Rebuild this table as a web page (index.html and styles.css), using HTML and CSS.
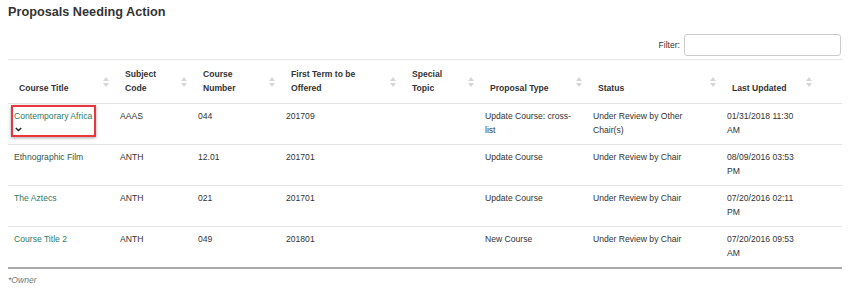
FILE: index.html
```html
<!DOCTYPE html>
<html>
<head>
<meta charset="utf-8">
<link rel="stylesheet" href="styles.css">
</head>
<body>
<div class="page">
  <h2 class="title">Proposals Needing Action</h2>
  <div class="toolbar">
    <label class="filter-label" for="flt">Filter:</label>
    <input id="flt" class="filter-input" type="text">
  </div>
  <table class="grid">
    <colgroup>
      <col class="c1"><col class="c2"><col class="c3"><col class="c4"><col class="c5"><col class="c6"><col class="c7"><col class="c8"><col class="c9">
    </colgroup>
    <thead>
      <tr>
        <th>Course Title<span class="sort"></span></th>
        <th>Subject Code<span class="sort"></span></th>
        <th>Course Number<span class="sort"></span></th>
        <th>First Term to be Offered<span class="sort"></span></th>
        <th>Special Topic<span class="sort"></span></th>
        <th>Proposal Type<span class="sort"></span></th>
        <th>Status<span class="sort"></span></th>
        <th>Last Updated<span class="sort"></span></th>
        <th class="blank"></th>
      </tr>
    </thead>
    <tbody>
      <tr>
        <td><div class="highlight"><a class="link" href="#">Contemporary Africa</a><div class="chev"><svg width="7" height="5" viewBox="0 0 7 5"><path d="M0.8 0.9 L3.5 3.6 L6.2 0.9" fill="none" stroke="#222" stroke-width="1.4"/></svg></div></div></td>
        <td>AAAS</td>
        <td>044</td>
        <td>201709</td>
        <td></td>
        <td>Update Course: cross-list</td>
        <td>Under Review by Other Chair(s)</td>
        <td>01/31/2018 11:30 AM</td>
        <td></td>
      </tr>
      <tr>
        <td><a class="link visited" href="#">Ethnographic Film</a></td>
        <td>ANTH</td>
        <td>12.01</td>
        <td>201701</td>
        <td></td>
        <td>Update Course</td>
        <td>Under Review by Chair</td>
        <td>08/09/2016 03:53 PM</td>
        <td></td>
      </tr>
      <tr>
        <td><a class="link" href="#">The Aztecs</a></td>
        <td>ANTH</td>
        <td>021</td>
        <td>201701</td>
        <td></td>
        <td>Update Course</td>
        <td>Under Review by Chair</td>
        <td>07/20/2016 02:11 PM</td>
        <td></td>
      </tr>
      <tr>
        <td><a class="link" href="#">Course Title 2</a></td>
        <td>ANTH</td>
        <td>049</td>
        <td>201801</td>
        <td></td>
        <td>New Course</td>
        <td>Under Review by Chair</td>
        <td>07/20/2016 09:53 AM</td>
        <td></td>
      </tr>
    </tbody>
  </table>
  <p class="note">*Owner</p>
</div>
</body>
</html>
```
FILE: styles.css
```css
html, body {
  margin: 0;
  padding: 0;
  background: #fff;
}
body {
  font-family: "Liberation Sans", Arial, sans-serif;
  color: #333;
  font-size: 8.6px;
  line-height: 14px;
}
.page {
  padding: 0 8px;
}
.title {
  margin: 4px 0 0 0;
  font-size: 12.7px;
  line-height: 16px;
  font-weight: bold;
  color: #333;
}
.toolbar {
  display: flex;
  justify-content: flex-end;
  align-items: center;
  gap: 4px;
  margin-top: 14px;
  padding-right: 1px;
}
.filter-label {
  font-size: 8.6px;
  color: #333;
}
.filter-input {
  box-sizing: border-box;
  width: 157px;
  height: 22px;
  border: 1px solid #ccc;
  border-radius: 3px;
  margin: 0;
  padding: 0 6px;
  font: inherit;
}
.grid {
  margin-top: 3px;
  width: 834px;
  border-collapse: collapse;
  table-layout: fixed;
}
.c1 { width: 106px; }
.c2 { width: 78px; }
.c3 { width: 88px; }
.c4 { width: 121px; }
.c5 { width: 78px; }
.c6 { width: 108px; }
.c7 { width: 134px; }
.c8 { width: 96px; }
.c9 { width: 25px; }
.grid th {
  position: relative;
  text-align: left;
  vertical-align: bottom;
  font-weight: bold;
  color: #333;
  padding: 7px 22px 8px 11px;
  border-top: 1px solid #e4e4e4;
  border-bottom: 1px solid #e4e4e4;
}
.grid th.blank {
  padding: 0;
}
.sort {
  position: absolute;
  right: 5px;
  top: 50%;
  margin-top: -5px;
  width: 6px;
  height: 10px;
}
.sort::before, .sort::after {
  content: "";
  position: absolute;
  left: 0;
  border-left: 3px solid transparent;
  border-right: 3px solid transparent;
}
.sort::before {
  top: 0;
  border-bottom: 4px solid #d6d6d6;
}
.sort::after {
  bottom: 0;
  border-top: 4px solid #d6d6d6;
}
.grid td {
  vertical-align: top;
  padding: 5px 12px 7px 6px;
  border-bottom: 1px solid #e4e4e4;
  color: #333;
}
.grid tbody tr:last-child td {
  border-bottom: 2px solid #a9a9a9;
}
.link {
  color: #2f7a66;
  text-decoration: none;
}
.link.visited {
  color: #34564c;
}
.highlight {
  width: fit-content;
  margin: -4px 0 0 -3px;
  padding: 2px 2px 0 1px;
  border: 2px solid #e8363f;
  box-shadow: 0 1px 3px rgba(0, 0, 0, 0.35);
}
.chev {
  display: flex;
  height: 12px;
  align-items: center;
  padding-left: 1px;
}
.note {
  margin: 4px 0 0 0;
  font-style: italic;
  color: #777;
}
```
